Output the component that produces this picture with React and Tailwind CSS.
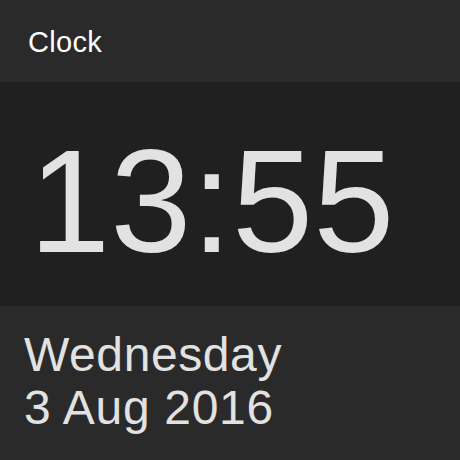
export default function App() {
  return (
    <div className="w-[460px] h-[460px] flex flex-col bg-[#2a2a2a] text-[#e2e2e2] font-['Liberation_Sans',Arial,sans-serif] overflow-hidden">
      {/* Header */}
      <div className="h-[82px] shrink-0 px-[28px] pt-[28px] bg-[#2a2a2a]">
        <h1 className="text-[29px] leading-[28px] tracking-[0.3px] text-white">Clock</h1>
      </div>

      {/* Time */}
      <div className="h-[224px] shrink-0 bg-[#202020] pl-[29px] pt-[47px]">
        <div className="text-[146px] leading-none">13:55</div>
      </div>

      {/* Date */}
      <div className="flex-1 px-[24px] pt-[22px] bg-[#2a2a2a]">
        <div className="text-[48px] leading-[53px] tracking-[0.6px]">Wednesday</div>
        <div className="text-[48px] leading-[53px] tracking-[0.7px]">3 Aug 2016</div>
      </div>
    </div>
  );
}
